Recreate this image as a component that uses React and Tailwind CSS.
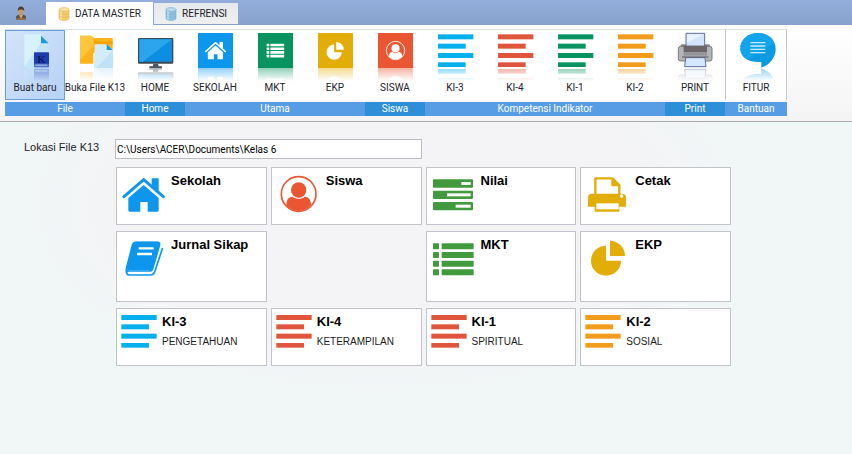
import { useState } from 'react'

const BLUE = '#0c96ec'
const CYAN = '#06b0ec'
const RED = '#e0563d'
const GREEN = '#079461'
const LEAF = '#419b3e'
const GOLD = '#e2ad06'
const ORANGE = '#f39c1b'

/* ---------- Shared shapes ---------- */

function HouseShape() {
  return (
    <>
      <path d="M4 57 L63 6 L122 57" fill="none" stroke="currentColor" strokeWidth="9" strokeLinecap="round" strokeLinejoin="round" />
      <path d="M87 2h21v38l-21 -18z" fill="currentColor" />
      <path d="M63 22 L108 61 V98 a4 4 0 0 1 -4 4 H75 V73 H53 V102 H21 a4 4 0 0 1 -4 -4 V61z" fill="currentColor" />
    </>
  )
}

function PersonShape() {
  return (
    <>
      <circle cx="54" cy="54" r="52" fill="none" stroke="currentColor" strokeWidth="5" />
      <circle cx="54" cy="42" r="23" fill="currentColor" />
      <path d="M17 88 C17 70 25 62 36 62 C46 70 62 70 72 62 C83 62 91 70 91 88 C81 99 68 105 54 105 C40 105 27 99 17 88z" fill="currentColor" />
    </>
  )
}

function ListShape() {
  return (
    <g fill="currentColor">
      {[0, 26, 52, 78].map((y) => (
        <g key={y}>
          <rect x="0" y={y} width="18" height="18" rx="2" />
          <rect x="26" y={y} width="96" height="18" rx="2" />
        </g>
      ))}
    </g>
  )
}

function PieShape() {
  return (
    <g fill="currentColor">
      <path d="M46 15 V60 H91 A45 45 0 1 1 46 15z" />
      <path d="M58 0 A46 46 0 0 1 103 46 H58z" />
    </g>
  )
}

function BarsShape() {
  return (
    <g fill="currentColor">
      <rect x="0" y="4" width="106" height="15" />
      <rect x="0" y="32" width="83" height="15" />
      <rect x="0" y="60" width="106" height="15" />
      <rect x="0" y="88" width="83" height="14" />
    </g>
  )
}

/* ---------- Ribbon icons (105 x 105 canvas) ---------- */

function Tile({ color, children }) {
  return (
    <>
      <rect width="105" height="105" fill={color} />
      <g color="#fff">{children}</g>
    </>
  )
}

const RIBBON_ICONS = {
  newFile: (mirrored) => (
    <>
      <path d="M19 4 H69 L93 30 V105 H19z" fill="#c4e6f8" />
      <path d="M19 4 H69 V30 L19 100z" fill="#d8f1fb" />
      <path d="M69 8 L92 31 H69z" fill="#1b9be0" />
      <rect x="48" y="58" width="45" height="45" rx="2" fill="#1d3fae" />
      <rect x="48" y="92" width="45" height="10" fill="#4a6cc4" />
      <rect x="52" y="95" width="36" height="3" fill="#b9cdf0" />
      {!mirrored && (
        <text x="70" y="89" textAnchor="middle" fontSize="32" fontWeight="bold" fontFamily="Liberation Serif, serif" fill="#0a1c66">K</text>
      )}
    </>
  ),
  openFile: () => (
    <>
      <path d="M6 8 H40 L48 15 H104 V60 H46 V92 H6z" fill="#ffb31a" />
      <path d="M6 8 H40 L46 14 V40 L6 80z" fill="#ffc53d" />
      <path d="M48 25 H104 V34 H48z" fill="#f5a300" />
      <path d="M50 34 H86 L105 52 V105 H48z" fill="#d3ecfa" />
      <path d="M105 52 V105 H55z" fill="#bfe2f6" />
      <path d="M86 33 L104 51 H86z" fill="#1b9be0" />
    </>
  ),
  monitor: () => (
    <>
      <rect x="0" y="15" width="106" height="77" rx="3" fill="#3d4a55" />
      <rect x="4" y="19" width="98" height="67" fill="#0d8ee0" />
      <path d="M4 19 H102 L14 86 H4z" fill="#2ba6ee" />
      <path d="M46 92 H60 L62 100 H72 V105 H34 V100 H44z" fill="#4a5660" />
    </>
  ),
  house: () => (
    <Tile color={BLUE}><g transform="translate(21 26) scale(0.5 0.52)"><HouseShape /></g></Tile>
  ),
  list: () => (
    <Tile color={GREEN}><g transform="translate(26 32) scale(0.43)"><ListShape /></g></Tile>
  ),
  pie: () => (
    <Tile color={GOLD}><g transform="translate(25 27) scale(0.51)"><PieShape /></g></Tile>
  ),
  person: () => (
    <Tile color="#ea5632"><g transform="translate(24 24) scale(0.53)"><PersonShape /></g></Tile>
  ),
  barsCyan: () => <g color={CYAN}><BarsShape /></g>,
  barsRed: () => <g color={RED}><BarsShape /></g>,
  barsGreen: () => <g color={GREEN}><BarsShape /></g>,
  barsOrange: () => <g color={ORANGE}><BarsShape /></g>,
  printer: () => (
    <>
      <rect x="8" y="34" width="88" height="12" rx="3" fill="#8b8b8f" />
      <rect x="1" y="40" width="101" height="44" rx="7" fill="#b4b5b9" stroke="#77787d" strokeWidth="3" />
      <path d="M24 1 H80 V40 H24z" fill="#d2e3fb" stroke="#5d6f96" strokeWidth="3" />
      <path d="M27 4 H77 L27 30z" fill="#e9f2ff" />
      <rect x="17" y="38" width="70" height="20" fill="#6b6569" />
      <rect x="17" y="58" width="70" height="10" fill="#96959a" />
      <path d="M23 74 H81 L84 101 H20z" fill="#d4e7fc" stroke="#5d6f96" strokeWidth="3" />
      <path d="M12 72 H92" stroke="#5a5b60" strokeWidth="3" />
    </>
  ),
  chat: () => (
    <>
      <path d="M57 0 C87 0 110 20 110 48 C110 76 90 96 67 104 V87 H57 C26 87 4 72 4 46 C4 20 27 0 57 0z" fill="#0a9be3" />
      <path d="M57 0 C80 0 98 12 106 30 L24 78 C12 71 4 60 4 46 C4 20 27 0 57 0z" fill="#12a5ec" />
      <path d="M34 29H79M34 39H79M34 49H79M34 59H79" stroke="#c9ecfc" strokeWidth="4" />
    </>
  ),
}

const GROUPS = [
  {
    title: 'File',
    items: [
      { label: 'Buat baru', icon: 'newFile' },
      { label: 'Buka File K13', icon: 'openFile' },
    ],
  },
  { title: 'Home', dark: true, items: [{ label: 'HOME', icon: 'monitor' }] },
  {
    title: 'Utama',
    items: [
      { label: 'SEKOLAH', icon: 'house' },
      { label: 'MKT', icon: 'list' },
      { label: 'EKP', icon: 'pie' },
    ],
  },
  { title: 'Siswa', dark: true, items: [{ label: 'SISWA', icon: 'person' }] },
  {
    title: 'Kompetensi Indikator',
    items: [
      { label: 'KI-3', icon: 'barsCyan' },
      { label: 'KI-4', icon: 'barsRed' },
      { label: 'KI-1', icon: 'barsGreen' },
      { label: 'KI-2', icon: 'barsOrange' },
    ],
  },
  { title: 'Print', dark: true, items: [{ label: 'PRINT', icon: 'printer' }] },
  { title: 'Bantuan', divided: true, items: [{ label: 'FITUR', icon: 'chat' }] },
]

function RibbonButton({ label, icon, active, onClick }) {
  const draw = RIBBON_ICONS[icon]
  return (
    <button
      onClick={onClick}
      className={`flex w-[60px] h-[70px] shrink-0 flex-col items-center border pt-[2px] ${
        active
          ? 'border-[#6b9fdc] bg-linear-to-br from-[#d3e4fa] to-[#b7d2f5]'
          : 'border-transparent hover:bg-[#e6f0fc]'
      }`}
    >
      <svg className="h-[35px] w-[35px] shrink-0 overflow-visible" viewBox="0 0 105 105" aria-hidden="true">
        {draw(false)}
      </svg>
      {/* Reflection under the icon */}
      <span className="h-[13px] w-[37px] shrink-0 overflow-hidden px-px opacity-45 [mask-image:linear-gradient(to_bottom,black,transparent)]">
        <svg className="h-[35px] w-[35px] -scale-y-100 overflow-visible" viewBox="0 0 105 105" aria-hidden="true">
          {draw(true)}
        </svg>
      </span>
      <span className="whitespace-nowrap leading-[14px]">{label}</span>
    </button>
  )
}

function Ribbon() {
  const [active, setActive] = useState('Buat baru')

  return (
    <div className="flex border-b border-[#a9abae] bg-linear-to-b from-white to-[#f4f4f5] px-[5px] pt-1 pb-[5px]">
      {GROUPS.map((group) => (
        <section key={group.title} className="flex flex-col gap-[2px]">
          <div
            className={`flex border-t border-[#d5e3e6] bg-white ${
              group.divided ? 'border-x border-x-[#c6c9cc]' : ''
            }`}
          >
            {group.items.map((item) => (
              <RibbonButton
                key={item.label}
                {...item}
                active={active === item.label}
                onClick={() => setActive(item.label)}
              />
            ))}
          </div>
          <h2
            className={`h-[14px] text-center leading-[14px] text-white ${
              group.dark ? 'bg-[#2c8fd8]' : 'bg-[#569de6]'
            }`}
          >
            {group.title}
          </h2>
        </section>
      ))}
    </div>
  )
}

/* ---------- Tabs ---------- */

function DatabaseIcon({ light, base, edge }) {
  return (
    <svg className="h-[14px] w-3 shrink-0" viewBox="0 0 12 14" aria-hidden="true">
      <path d="M1 2.5v9c0 1 2.2 2 5 2s5-1 5-2v-9z" fill={base} stroke={edge} strokeWidth=".5" />
      <path d="M2 4v8l2 .8V4z" fill={light} />
      <ellipse cx="6" cy="2.5" rx="5" ry="2" fill={light} stroke={edge} strokeWidth=".5" />
      <path d="M1 6c1 1.7 9 1.7 10 0M1 9c1 1.7 9 1.7 10 0" fill="none" stroke={edge} strokeWidth=".4" />
    </svg>
  )
}

function TabBar() {
  const [tab, setTab] = useState('master')

  return (
    <div className="flex h-[25px] items-end bg-linear-to-b from-[#93aedb] to-[#88a2cd]">
      <button className="flex h-full w-[46px] items-center justify-center pr-[5px]" aria-label="Pengguna">
        <svg className="h-[14px] w-3" viewBox="0 0 12 14" aria-hidden="true">
          <path d="M1 14v-3c0-1.6 2-2.5 5-2.5s5 .9 5 2.5v3z" fill="#5b5148" />
          <path d="M4 9l2 4 2-4z" fill="#d9a566" />
          <ellipse cx="6" cy="5.5" rx="2.6" ry="3.2" fill="#c99a66" />
          <path d="M2.8 5.5C2.5 2 4 .5 6 .5s3.5 1.5 3.2 5C8.5 3.5 7 3.5 6 3.5s-2.5 0-3.2 2z" fill="#4b3a2d" />
          <path d="M1 13h10" stroke="#b98a4e" />
        </svg>
      </button>
      <div role="tablist" className="flex h-full items-end gap-px">
        <button
          role="tab"
          aria-selected={tab === 'master'}
          onClick={() => setTab('master')}
          className="flex h-[23px] items-center gap-[5px] bg-white px-3"
        >
          <DatabaseIcon light="#fbe3a0" base="#f3cc6c" edge="#dcab4a" />
          DATA MASTER
        </button>
        <button
          role="tab"
          aria-selected={tab === 'refrensi'}
          onClick={() => setTab('refrensi')}
          className="mb-px flex h-[21px] items-center gap-[5px] bg-linear-to-b from-[#e6e9ee] to-[#efefef] px-[11px]"
        >
          <DatabaseIcon light="#b9dcf0" base="#8fc2e0" edge="#6ba3c8" />
          REFRENSI
        </button>
      </div>
    </div>
  )
}

/* ---------- Menu cards (coordinates are thirds of a pixel) ---------- */

const CARD_ICONS = {
  house: <g color={BLUE} transform="translate(17 29)"><HouseShape /></g>,
  person: <g color="#ea5632" transform="translate(26 24)"><PersonShape /></g>,
  sliders: (
    <g>
      <g fill={LEAF}>
        <rect x="18" y="34" width="120" height="25" rx="3" />
        <rect x="18" y="68" width="120" height="25" rx="3" />
        <rect x="18" y="102" width="120" height="25" rx="3" />
      </g>
      <g fill="#fff">
        <rect x="103" y="42" width="28" height="9" />
        <rect x="60" y="76" width="71" height="9" />
        <rect x="86" y="110" width="45" height="9" />
      </g>
    </g>
  ),
  printer: (
    <g>
      <path d="M43 82 V31 H94 L115 51 V82" fill="#fff" stroke={GOLD} strokeWidth="7" strokeLinejoin="round" />
      <path d="M91 30 L117 55 H91z" fill={GOLD} />
      <path d="M33 77 H123 A12 12 0 0 1 135 89 V116 H115 V131 H41 V116 H21 V89 A12 12 0 0 1 33 77z" fill={GOLD} />
      <rect x="46" y="106" width="67" height="18" fill="#fff" />
      <circle cx="122" cy="84" r="5" fill="#fff" />
    </g>
  ),
  book: (
    <g>
      <path d="M56 31 H121 Q130 31 127 41 L107 110 Q105 117 97 117 H36 Q28 117 29 124 Q31 129 38 129 H100 Q110 129 113 120 L136 50" fill="none" stroke={BLUE} strokeWidth="5" strokeLinecap="round" />
      <path d="M52 29 H122 Q130 31 127 41 L108 107 Q105 115 97 115 H38 Q30 115 26 122 Q24 114 27 104 L44 38 Q46 31 52 29z" fill={BLUE} />
      <path d="M65 49 H110 M60 66 H105" stroke="#fff" strokeWidth="7" />
    </g>
  ),
  list: <g color={LEAF} transform="translate(18 34)"><ListShape /></g>,
  pie: <g color={GOLD} transform="translate(29 26)"><PieShape /></g>,
}

const CARDS = [
  { title: 'Sekolah', icon: 'house' },
  { title: 'Siswa', icon: 'person' },
  { title: 'Nilai', icon: 'sliders' },
  { title: 'Cetak', icon: 'printer' },
  { title: 'Jurnal Sikap', icon: 'book', tall: true },
  null,
  { title: 'MKT', icon: 'list', tall: true },
  { title: 'EKP', icon: 'pie', tall: true },
  { title: 'KI-3', subtitle: 'PENGETAHUAN', color: CYAN },
  { title: 'KI-4', subtitle: 'KETERAMPILAN', color: RED },
  { title: 'KI-1', subtitle: 'SPIRITUAL', color: RED },
  { title: 'KI-2', subtitle: 'SOSIAL', color: ORANGE },
]

function MenuCard({ title, subtitle, icon, color, tall }) {
  return (
    <button
      className={`flex items-start border border-[#c3c4c9] bg-white text-left hover:border-[#6b9fdc] ${
        tall ? 'min-h-[71px]' : 'min-h-[58px]'
      }`}
    >
      {subtitle ? (
        <svg className="h-[45px] w-[45px] shrink-0" viewBox="0 0 135 135" aria-hidden="true">
          <g color={color} transform="translate(13 14)"><BarsShape /></g>
        </svg>
      ) : (
        <svg className="h-[50px] w-[54px] shrink-0" viewBox="0 0 162 150" aria-hidden="true">
          {CARD_ICONS[icon]}
        </svg>
      )}
      <span className="flex flex-col gap-1 pt-[5px]">
        <span className="text-[13px] font-bold leading-4 text-black">{title}</span>
        {subtitle && <span className="text-[10px] leading-4 text-[#1c1c22]">{subtitle}</span>}
      </span>
    </button>
  )
}

function App() {
  const [path, setPath] = useState('C:\\Users\\ACER\\Documents\\Kelas 6')

  return (
    <div className="flex min-h-screen flex-col bg-[#f1f6f8] font-[Roboto,sans-serif] text-[10px] text-[#22222a]">
      <TabBar />
      <Ribbon />

      <main className="flex grow flex-col gap-2 bg-[radial-gradient(ellipse_at_45%_25%,#f4f4f6_40%,#f1f6f7_55%)] pt-[17px] pr-6 pb-6 pl-6 font-['Liberation_Sans',sans-serif]">
        <div className="flex items-start">
          <label htmlFor="lokasi" className="w-[91px] shrink-0 text-[11px] leading-4">
            Lokasi File K13
          </label>
          <input
            id="lokasi"
            type="text"
            value={path}
            onChange={(e) => setPath(e.target.value)}
            className="h-5 w-full max-w-[307px] border border-[#bcbdc2] bg-white px-px font-[Roboto,sans-serif] text-[10px] text-black"
          />
        </div>

        <div className="ml-[92px] grid max-w-[615px] grid-cols-4 gap-x-1 gap-y-1.5">
          {CARDS.map((card, i) => (card ? <MenuCard key={card.title} {...card} /> : <div key={i} />))}
        </div>
      </main>
    </div>
  )
}

export default App
